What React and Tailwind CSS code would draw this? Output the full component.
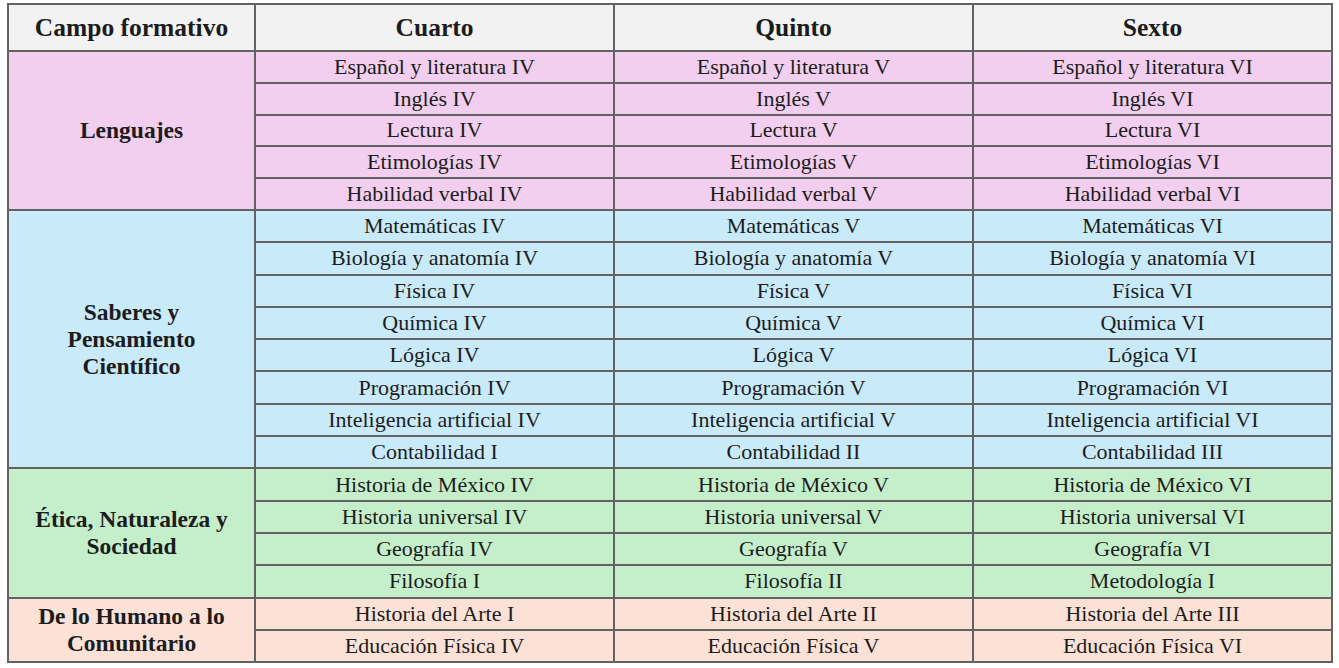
import React from "react";

const groups = [
  {
    name: ["Lenguajes"],
    bg: "bg-[#f2cfee]",
    h: "h-[31.8px]",
    rows: [
      ["Español y literatura IV", "Español y literatura V", "Español y literatura VI"],
      ["Inglés IV", "Inglés V", "Inglés VI"],
      ["Lectura IV", "Lectura V", "Lectura VI"],
      ["Etimologías IV", "Etimologías V", "Etimologías VI"],
      ["Habilidad verbal IV", "Habilidad verbal V", "Habilidad verbal VI"],
    ],
  },
  {
    name: ["Saberes y", "Pensamiento", "Científico"],
    bg: "bg-[#c9eaf9]",
    h: "h-[32.3px]",
    rows: [
      ["Matemáticas IV", "Matemáticas V", "Matemáticas VI"],
      ["Biología y anatomía IV", "Biología y anatomía V", "Biología y anatomía VI"],
      ["Física IV", "Física V", "Física VI"],
      ["Química IV", "Química V", "Química VI"],
      ["Lógica IV", "Lógica V", "Lógica VI"],
      ["Programación IV", "Programación V", "Programación VI"],
      ["Inteligencia artificial IV", "Inteligencia artificial V", "Inteligencia artificial VI"],
      ["Contabilidad I", "Contabilidad II", "Contabilidad III"],
    ],
  },
  {
    name: ["Ética, Naturaleza y", "Sociedad"],
    bg: "bg-[#c5efcb]",
    h: "h-[32.3px]",
    rows: [
      ["Historia de México IV", "Historia de México V", "Historia de México VI"],
      ["Historia universal IV", "Historia universal V", "Historia universal VI"],
      ["Geografía IV", "Geografía V", "Geografía VI"],
      ["Filosofía I", "Filosofía II", "Metodología I"],
    ],
  },
  {
    name: ["De lo Humano a lo", "Comunitario"],
    bg: "bg-[#fbe1d6]",
    h: "h-[32px]",
    rows: [
      ["Historia del Arte I", "Historia del Arte II", "Historia del Arte III"],
      ["Educación Física IV", "Educación Física V", "Educación Física VI"],
    ],
  },
];

const cell = "border-2 border-[#626262] text-center p-0";

export default function App() {
  return (
    <div className="w-[1339px] h-[668px] bg-white pl-[7px] pt-[3px] font-['Liberation_Serif',serif] text-[#1c1c1c]">
      <table className="border-collapse table-fixed w-[1326px]">
        <colgroup>
          <col className="w-[247px]" />
          <col className="w-[359px]" />
          <col className="w-[359px]" />
          <col className="w-[359px]" />
        </colgroup>
        <thead>
          <tr className="h-[47px] bg-[#f2f2f2] text-[25.5px] font-bold">
            <th className={`${cell} leading-[30px]`}>Campo formativo</th>
            <th className={`${cell} leading-[30px]`}>Cuarto</th>
            <th className={`${cell} leading-[30px]`}>Quinto</th>
            <th className={`${cell} leading-[30px]`}>Sexto</th>
          </tr>
        </thead>
        <tbody>
          {groups.map((g) =>
            g.rows.map((r, i) => (
              <tr key={g.name[0] + i} className={`${g.h} ${g.bg} text-[22px]`}>
                {i === 0 && (
                  <td rowSpan={g.rows.length} className={`${cell} font-bold leading-[27px] text-[23.5px]`}>
                    {g.name.map((n) => (
                      <div key={n}>{n}</div>
                    ))}
                  </td>
                )}
                {r.map((t, j) => (
                  <td key={j} className={`${cell} leading-[28px]`}>
                    {t}
                  </td>
                ))}
              </tr>
            ))
          )}
        </tbody>
      </table>
    </div>
  );
}
